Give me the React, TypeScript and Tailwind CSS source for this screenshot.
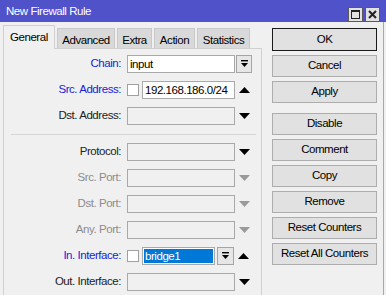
import React from 'react';

const font = { fontFamily: '"Liberation Sans", Arial, sans-serif' };

function Tri({ up, muted }: { up?: boolean; muted?: boolean }) {
  const c = muted ? '#9a9a9a' : '#000';
  return (
    <svg width="11" height="6" viewBox="0 0 11 6">
      {up ? <polygon points="0,6 11,6 5.5,0" fill={c} /> : <polygon points="0,0 11,0 5.5,6" fill={c} />}
    </svg>
  );
}

function DropBtn({ w }: { w: string }) {
  return (
    <div className={`${w} h-[18px] border border-[#a5a5a5] bg-[#e6e6e6] flex items-center justify-center`}>
      <svg width="9" height="8" viewBox="0 0 9 8">
        <rect x="1" y="0" width="7" height="1.4" fill="#000" />
        <polygon points="1,3 8,3 4.5,7" fill="#000" />
      </svg>
    </div>
  );
}

function Check() {
  return <div className="w-[12px] h-[12px] border border-[#a0a0a0] bg-white shrink-0" />;
}

function Row({ label, color, children }: { label: string; color: string; children: React.ReactNode }) {
  return (
    <div className="flex items-center h-[18px]">
      <div className={`w-[118px] text-right pr-[1px] whitespace-nowrap ${color}`}>{label}</div>
      <div className="ml-[5px] flex items-center">{children}</div>
    </div>
  );
}

const emptyField = 'w-[108px] h-[18px] border border-[#a9a9a9] bg-[#f0f0f0]';

export default function App() {
  const tabs = [
    { name: 'Advanced', w: 'w-[58px]' },
    { name: 'Extra', w: 'w-[35px]' },
    { name: 'Action', w: 'w-[41px]' },
    { name: 'Statistics', w: 'w-[53px]' },
  ];
  const buttons = ['Cancel', 'Apply', 'Disable', 'Comment', 'Copy', 'Remove', 'Reset Counters', 'Reset All Counters'];

  return (
    <div className="w-[386px] h-[295px] overflow-hidden bg-[#4f52c9] text-[11.5px] tracking-[-0.45px] text-black" style={font}>
      {/* Title bar */}
      <div className="h-[22px] flex items-center pl-[6px] pr-[6px]">
        <span className="text-white flex-1 pt-[1px]">New Firewall Rule</span>
        <div className="flex gap-[2px] mt-[6px]">
          <div className="w-[15px] h-[15px] bg-[#e2e2e2] border border-[#5a5a5a] flex items-center justify-center">
            <div className="w-[9px] h-[9px] border-[1.5px] border-[#222] border-t-[2px]" />
          </div>
          <div className="w-[15px] h-[15px] bg-[#e2e2e2] border border-[#5a5a5a] flex items-center justify-center">
            <svg width="9" height="9" viewBox="0 0 9 9">
              <path d="M1 1 L8 8 M8 1 L1 8" stroke="#222" strokeWidth="2" />
            </svg>
          </div>
        </div>
      </div>

      {/* Body */}
      <div className="h-[273px] bg-[#f0f0f0]">
        <div className="w-[384px] h-full border-r border-[#a8a8a8] flex">
          {/* Left: tabs + panel */}
          <div className="ml-[3px] w-[259px] flex flex-col pt-[2px]">
            <div className="h-[24px] flex items-end relative z-10">
              <div className="w-[52px] h-[24px] border border-b-0 border-[#d0d0d0] bg-[#f0f0f0] pl-[6px] pt-[3px] -mb-[1px]">General</div>
              {tabs.map(t => (
                <div key={t.name} className={`${t.w} h-[20px] ml-[2px] border border-b-0 border-[#c8c8c8] bg-[#d9d9d9] text-center pt-[3px]`}>
                  {t.name}
                </div>
              ))}
            </div>
            <div className="flex-1 border border-b-0 border-[#d0d0d0] pt-[6px] flex flex-col gap-[8px]">
              <Row label="Chain:" color="text-[#1b1bd8]">
                <div className="w-[108px] h-[18px] border border-[#a9a9a9] bg-white pl-[2px] leading-[16px]">input</div>
                <div className="ml-[1px]"><DropBtn w="w-[16px]" /></div>
              </Row>
              <Row label="Src. Address:" color="text-[#1b1bd8]">
                <Check />
                <div className="ml-[3px] w-[93px] h-[18px] border border-[#a9a9a9] bg-white pl-[2px] leading-[16px] whitespace-nowrap overflow-hidden">192.168.186.0/24</div>
                <div className="w-[19px] flex justify-center"><Tri up /></div>
              </Row>
              <Row label="Dst. Address:" color="text-[#222]">
                <div className={emptyField} />
                <div className="w-[19px] flex justify-center"><Tri /></div>
              </Row>
              <div className="h-px bg-[#d6d6d6] ml-[7px] mr-[5px] mt-[1px]" />
              <Row label="Protocol:" color="text-[#222]">
                <div className={emptyField} />
                <div className="w-[19px] flex justify-center"><Tri /></div>
              </Row>
              <Row label="Src. Port:" color="text-[#8c8c8c]">
                <div className={emptyField} />
                <div className="w-[19px] flex justify-center"><Tri muted /></div>
              </Row>
              <Row label="Dst. Port:" color="text-[#8c8c8c]">
                <div className={emptyField} />
                <div className="w-[19px] flex justify-center"><Tri muted /></div>
              </Row>
              <Row label="Any. Port:" color="text-[#8c8c8c]">
                <div className={emptyField} />
                <div className="w-[19px] flex justify-center"><Tri muted /></div>
              </Row>
              <Row label="In. Interface:" color="text-[#1b1bd8]">
                <Check />
                <div className="ml-[3px] w-[73px] h-[18px] border border-[#a9a9a9] bg-white p-[1px]">
                  <div className="h-full bg-[#0078d7] text-white pl-[1px] leading-[14px]">bridge1</div>
                </div>
                <div className="ml-[2px]"><DropBtn w="w-[17px]" /></div>
                <div className="w-[19px] flex justify-center"><Tri up /></div>
              </Row>
              <Row label="Out. Interface:" color="text-[#222]">
                <div className={emptyField} />
                <div className="w-[19px] flex justify-center"><Tri /></div>
              </Row>
            </div>
          </div>

          {/* Right: buttons */}
          <div className="ml-[10px] w-[105px] pt-[6px] flex flex-col">
            <div className="h-[23px] border border-[#1a1a1a] bg-[#e1e1e1] flex items-center justify-center">OK</div>
            {buttons.map((b, i) => (
              <div
                key={b}
                className={`h-[22px] border border-[#adadad] bg-[#e1e1e1] flex items-center justify-center ${i === 2 ? 'mt-[10px]' : 'mt-[4px]'}`}
              >
                {b}
              </div>
            ))}
          </div>
        </div>
      </div>
    </div>
  );
}
